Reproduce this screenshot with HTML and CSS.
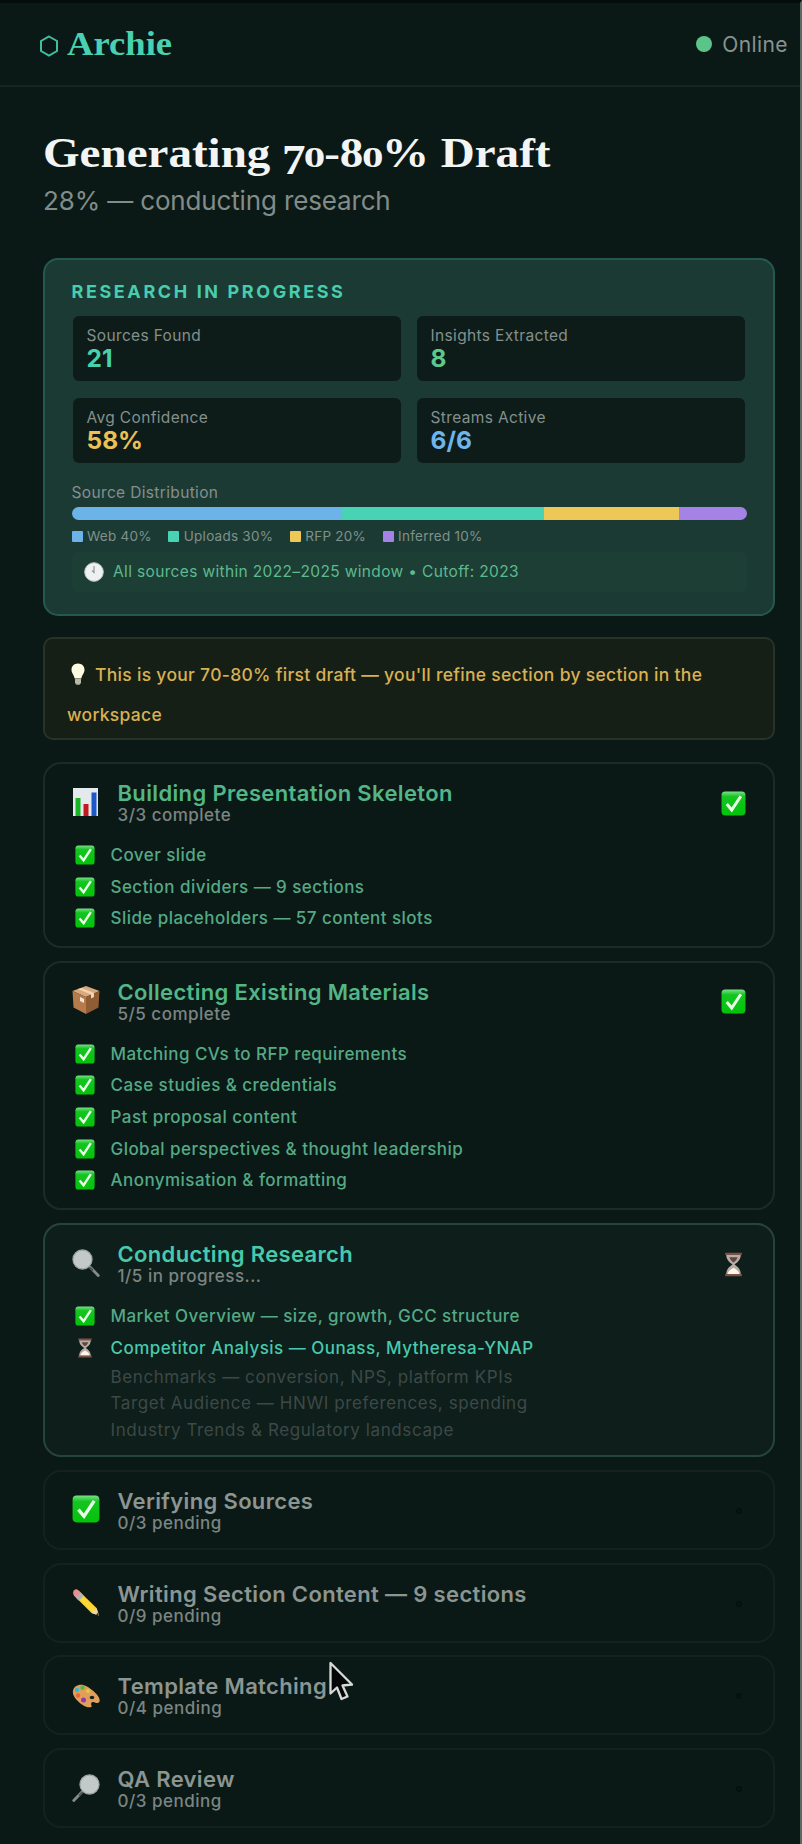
FILE: index.html
```html
<!DOCTYPE html>
<html lang="en">
<head>
<meta charset="utf-8">
<title>Archie</title>
<link rel="stylesheet" href="styles.css">
</head>
<body>
<svg width="0" height="0" class="defs" aria-hidden="true">
  <defs>
    <linearGradient id="lid" x1="0" y1="0" x2="0" y2="1"><stop offset="0" stop-color="#7be08a"/><stop offset=".22" stop-color="#14c521"/><stop offset="1" stop-color="#02c30a"/></linearGradient>
    <linearGradient id="lead" x1="0" y1="1" x2="1" y2="0"><stop offset="0" stop-color="#f5a90c"/><stop offset=".5" stop-color="#ffdb35"/><stop offset="1" stop-color="#e99c12"/></linearGradient>
    <symbol id="check" viewBox="0 0 24 24"><rect x=".5" y=".5" width="23" height="23" rx="3.5" fill="url(#lid)"/><path d="M5.5 12.5 10.3 18.2 19 5" fill="none" stroke="#e9ffe6" stroke-width="2.9"/></symbol>
    <symbol id="glass" viewBox="0 0 24 24"><path d="m15.5 15.5 7 7.2" stroke="#858b8b" stroke-width="2.4" stroke-linecap="round"/><path d="m14 14.5 4 4" stroke="#4d5554" stroke-width="1.5"/><circle cx="9" cy="9" r="8.2" fill="#c3c9c9" stroke="#9da6a6"/></symbol>
    <symbol id="hourglass" viewBox="0 0 20 24"><path d="M3 2.5h14c0 5-3 7.5-6 9.500 3 2 6 4.500 6 9.500H3c0-5 3-7.500 6-9.500-3-2-6-4.500-6-9.500z" fill="#b9aca5"/><path d="M6 5h8c-1 3-3 4-4 5-1-1-3-2-4-5z" fill="#5b4a42"/><path d="M4.500 21c.5-3 3-4.500 5.500-6 2.500 1.500 5 3 5.500 6z" fill="#fff6ea"/><path d="M2 1.800h16M2 22.200h16" stroke="#7c5146" stroke-width="2.200"/></symbol>
  </defs>
</svg>
<div class="app">
  <header class="topbar">
    <div class="brand">
      <svg class="hex" viewBox="0 0 20 22"><path d="M10 1.500 18 6v10l-8 4.500L2 16V6z" fill="none" stroke="#3fbf9f" stroke-width="2"/></svg>
      <span class="brand-name">Archie</span>
    </div>
    <div class="status"><i class="dot"></i><span>Online</span></div>
  </header>
  <main>
    <h1 class="title">Generating <span class="seven">7</span><span class="zero">0</span>-8<span class="zero">0</span>% Draft</h1>
    <p class="subtitle">28% — conducting research</p>

    <section class="research">
      <h2>RESEARCH IN PROGRESS</h2>
      <div class="stats">
        <div class="stat"><span>Sources Found</span><b class="teal">21</b></div>
        <div class="stat"><span>Insights Extracted</span><b class="green">8</b></div>
        <div class="stat"><span>Avg Confidence</span><b class="gold">58%</b></div>
        <div class="stat"><span>Streams Active</span><b class="blue">6/6</b></div>
      </div>
      <div class="dist-label">Source Distribution</div>
      <div class="bar"><i class="web"></i><i class="uploads"></i><i class="rfp"></i><i class="inferred"></i></div>
      <div class="legend">
        <span><i class="web"></i>Web 40%</span><span><i class="uploads"></i>Uploads 30%</span><span><i class="rfp"></i>RFP 20%</span><span><i class="inferred"></i>Inferred 10%</span>
      </div>
      <div class="fresh">
        <svg viewBox="0 0 20 20"><circle cx="10" cy="10" r="9.300" fill="#eef1ef" stroke="#bcc9c3"/><path d="M10 4v6.500L8 8.500" fill="none" stroke="#8f9a95" stroke-width="1.200"/></svg>
        <span>All sources within 2022–2025 window • Cutoff: 2023</span>
      </div>
    </section>

    <p class="note"><svg viewBox="0 0 14 22"><path d="M7 .5c4 0 6.500 2.800 6.500 6.300 0 3.400-2.500 5-3.200 8.700H3.700C3 11.800.5 10.200.5 6.800.5 3.300 3 .5 7 .5z" fill="#fffbe0"/><path d="M4 16h6v4l-1.500 1.800h-3L4 20z" fill="#b5b9a6"/></svg>This is your 70-80% first draft — you'll refine section by section in the workspace</p>

    <div class="steps">
      <section class="card done">
        <div class="head">
          <svg class="icon" viewBox="0 0 28 28"><path d="M1 0h25v28H1z" fill="#e3e9ed"/><path d="M3.500 10h5v18h-5z" fill="#18b522"/><path d="M11.500 16h5v12h-5z" fill="#c2181f"/><path d="M19.500 4.500h5V28h-5z" fill="#1d57c9"/></svg>
          <div class="text"><h3>Building Presentation Skeleton</h3><p>3/3 complete</p></div>
          <svg class="state"><use href="#check"/></svg>
        </div>
        <ul>
          <li><svg><use href="#check"/></svg>Cover slide</li>
          <li><svg><use href="#check"/></svg>Section dividers — 9 sections</li>
          <li><svg><use href="#check"/></svg>Slide placeholders — 57 content slots</li>
        </ul>
      </section>

      <section class="card done">
        <div class="head">
          <svg class="icon" viewBox="0 0 28 28"><path d="m14 0 13.500 5L14 11 .5 5z" fill="#d8a97c"/><path d="M.5 5 14 11v17L1.500 21.500z" fill="#b67b4a"/><path d="M27.500 5 14 11v17l12.500-6.500z" fill="#8f5c34"/><path d="m6 3 13 5.500v4l3-1.500V7L9.500 2z" fill="#f0d5b4"/><path d="m8 11 4 2v4l-4-2z" fill="#efe4d6"/></svg>
          <div class="text"><h3>Collecting Existing Materials</h3><p>5/5 complete</p></div>
          <svg class="state"><use href="#check"/></svg>
        </div>
        <ul>
          <li><svg><use href="#check"/></svg>Matching CVs to RFP requirements</li>
          <li><svg><use href="#check"/></svg>Case studies &amp; credentials</li>
          <li><svg><use href="#check"/></svg>Past proposal content</li>
          <li><svg><use href="#check"/></svg>Global perspectives &amp; thought leadership</li>
          <li><svg><use href="#check"/></svg>Anonymisation &amp; formatting</li>
        </ul>
      </section>

      <section class="card active">
        <div class="head">
          <svg class="icon"><use href="#glass"/></svg>
          <div class="text"><h3>Conducting Research</h3><p>1/5 in progress...</p></div>
          <svg class="state"><use href="#hourglass"/></svg>
        </div>
        <ul>
          <li><svg><use href="#check"/></svg>Market Overview — size, growth, GCC structure</li>
          <li class="current"><svg><use href="#hourglass"/></svg>Competitor Analysis — Ounass, Mytheresa-YNAP</li>
          <li class="waiting">Benchmarks — conversion, NPS, platform KPIs</li>
          <li class="waiting">Target Audience — HNWI preferences, spending</li>
          <li class="waiting">Industry Trends &amp; Regulatory landscape</li>
        </ul>
      </section>

      <section class="card">
        <div class="head">
          <svg class="icon"><use href="#check"/></svg>
          <div class="text"><h3>Verifying Sources</h3><p>0/3 pending</p></div>
          <i class="idle"></i>
        </div>
      </section>
      <section class="card">
        <div class="head">
          <svg class="icon" viewBox="0 0 28 28"><path d="M6.500 2.500 24.500 20l2.500 7.500-7.500-2.500L2 7.500z" fill="url(#lead)"/><path d="m6.500 2.500 4 4L6 11.500l-4-4C.5 5.500 1 3.500 2.200 2.200S5 1 6.500 2.500z" fill="#e98f94"/><path d="m8.500 4.500 3.200 3.200-4.700 5L3.800 9.500z" fill="#aeb4b4"/><path d="M24.500 20l2.500 7.500-7.500-2.500z" fill="#f0d5a5"/><path d="m27 27.500-3-1 2-2z" fill="#333"/></svg>
          <div class="text"><h3>Writing Section Content — 9 sections</h3><p>0/9 pending</p></div>
          <i class="idle"></i>
        </div>
      </section>
      <section class="card">
        <div class="head">
          <svg class="icon" viewBox="0 0 28 28"><path d="M1 10C2 4 9 2 15 5.500S29 16 27.500 20.500c-1.500 3-4 1-6 .5s-3 1.500-2 3.500-2 2.500-6 1S-.5 16 1 10z" fill="#e0a05c"/><ellipse cx="20" cy="16.500" rx="2.300" ry="1.700" fill="#20211c"/><circle cx="5" cy="9" r="2.200" fill="#38b9c9"/><circle cx="10.500" cy="6.700" r="2.200" fill="#4fba48"/><circle cx="16" cy="10" r="2" fill="#e6c93b"/><circle cx="6" cy="14.500" r="2.200" fill="#e8663e"/><circle cx="11.500" cy="19" r="2.500" fill="#9437b5"/></svg>
          <div class="text"><h3>Template Matching</h3><p>0/4 pending</p></div>
          <i class="idle"></i>
        </div>
        <svg class="cursor" viewBox="0 0 25 40"><path d="M1.500 2v30.500l6.500-6 4.500 11.500 6-2.500-5-11 9.500-1z" fill="#050706" stroke="#d6dad8" stroke-width="2.300" stroke-linejoin="round"/></svg>
      </section>
      <section class="card">
        <div class="head">
          <svg class="icon mirrored"><use href="#glass"/></svg>
          <div class="text"><h3>QA Review</h3><p>0/3 pending</p></div>
          <i class="idle"></i>
        </div>
      </section>
    </div>
  </main>
</div>
</body>
</html>
```
FILE: styles.css
```css
* { box-sizing: border-box; margin: 0; padding: 0; }
body { background: #0b1916; color: #8a9491; font-family: Inter, "Liberation Sans", sans-serif; }
.defs { display: block; height: 0; }
.app { height: 1844px; overflow: hidden; border-top: 3px solid #040d0a; border-right: 2px solid #5b6965; }

.topbar { display: flex; justify-content: space-between; align-items: center; height: 84px; padding: 0 12px 0 39px; border-bottom: 2px solid #172622; }
.brand { display: flex; align-items: center; gap: 8px; color: #49d1b2; }
.hex { width: 20px; height: 22px; margin-top: 3px; }
.brand-name { font: 700 33px/40px "Liberation Serif", serif; transform: scaleX(1.11); transform-origin: left; }
.status { display: flex; align-items: center; gap: 10px; font-size: 21px; letter-spacing: .4px; color: #89928f; }
.dot { width: 16px; height: 16px; border-radius: 50%; background: #5cc489; }

main { padding: 42px 25px 0 43px; }
.title { font: 700 42px/48px "Liberation Serif", serif; color: #f2f5f4; white-space: nowrap; transform: scaleX(1.12); transform-origin: left; }
.seven, .zero { display: inline-block; }
.seven { transform: translateY(7px); }
.zero { font-size: 30px; transform: scaleX(1.28); margin: 0 .8px; }
.subtitle { margin-top: 4px; font-size: 26px; line-height: 32px; letter-spacing: -.15px; color: #828c89; }

.research { height: 358px; margin-top: 41px; padding: 21px 26.500px 0; border: 2px solid #26594d; border-radius: 15px; background: #1c3a34; }
.research h2 { font-size: 18px; line-height: 22px; letter-spacing: 2.600px; color: #48cdae; }
.stats { display: grid; grid-template-columns: 1fr 1fr; gap: 17px 16px; margin: 13px 1.500px 0; }
.stat { display: flex; flex-direction: column; height: 65px; padding: 10px 13.500px; border-radius: 6px; background: #0d1c19; }
.stat span, .dist-label { font-size: 15.500px; line-height: 19px; letter-spacing: .35px; color: #84908c; }
.stat b { font-size: 24.500px; line-height: 26px; }
.teal { color: #48d1b1; }
.green { color: #5ec88c; }
.gold { color: #ebc057; }
.blue { color: #6fb4ea; }
.dist-label { margin-top: 20px; }
.bar { display: flex; height: 13px; margin-top: 5px; border-radius: 7px; overflow: hidden; }
.web { background: #6bb3e8; }
.uploads { background: #48d3b5; }
.rfp { background: #edc856; }
.inferred { background: #a583e6; }
.bar .web { flex: 40; }
.bar .uploads { flex: 30; }
.bar .rfp { flex: 20; }
.bar .inferred { flex: 10; }
.legend { display: flex; gap: 16.500px; margin-top: 8px; font-size: 13.500px; line-height: 16px; letter-spacing: .25px; color: #7f918b; }
.legend span { display: flex; align-items: center; gap: 4.500px; }
.legend i { width: 11px; height: 11px; border-radius: 1px; }
.fresh { display: flex; align-items: center; gap: 9px; height: 40px; margin-top: 8px; padding-left: 12.500px; border-radius: 6px; background: #1c3e35; color: #5cba8e; font-size: 15.500px; line-height: 20px; letter-spacing: .35px; }
.fresh svg { width: 20px; height: 20px; }

.note { height: 103px; margin-top: 21px; padding: 16px 22px 0; border: 2px solid #283226; border-radius: 10px; background: #161f16; color: #d8b152; font-size: 17.500px; line-height: 40px; font-weight: 500; letter-spacing: .3px; }
.note svg { width: 14px; height: 22px; margin: 0 10px 0 4px; vertical-align: -4px; }

.steps { display: flex; flex-direction: column; gap: 12.800px; margin-top: 22px; }
.card { position: relative; min-height: 80px; padding: 17px 27px 12px 27px; border: 2px solid #14221f; border-radius: 18px; background: #0b1916; }
.done { border-color: #1d2b28; }
.active { border-color: #27443c; background: #0e1e1b; }
.head { display: flex; align-items: center; }
.icon { width: 28px; height: 28px; margin-top: -3px; }
.mirrored { transform: scaleX(-1); }
.text { flex: 1; padding-left: 17.500px; }
.text h3 { font-size: 22px; line-height: 24px; font-weight: 600; letter-spacing: .35px; color: #8b9592; }
.text p { font-size: 17px; line-height: 20px; font-weight: 450; letter-spacing: .5px; color: #7b8582; }
.done h3 { color: #52b686; }
.active h3 { color: #49c9ac; }
.state { width: 25px; height: 25px; }
.idle { width: 6px; height: 6px; margin-right: 4px; border: 2px solid #06110e; border-radius: 50%; }
ul { margin-top: 14px; list-style: none; }
li { display: flex; align-items: center; gap: 16px; height: 31.700px; padding-left: 2.500px; font-size: 17px; font-weight: 500; letter-spacing: .45px; color: #55a985; }
li svg { width: 20px; height: 20px; }
.current { color: #49c9ac; letter-spacing: .48px; }
.waiting { height: 26.500px; padding-left: 38.500px; font-weight: 400; letter-spacing: .6px; color: #3d4946; }
.cursor { position: absolute; left: 284px; top: 4px; width: 25px; height: 40px; }
```
